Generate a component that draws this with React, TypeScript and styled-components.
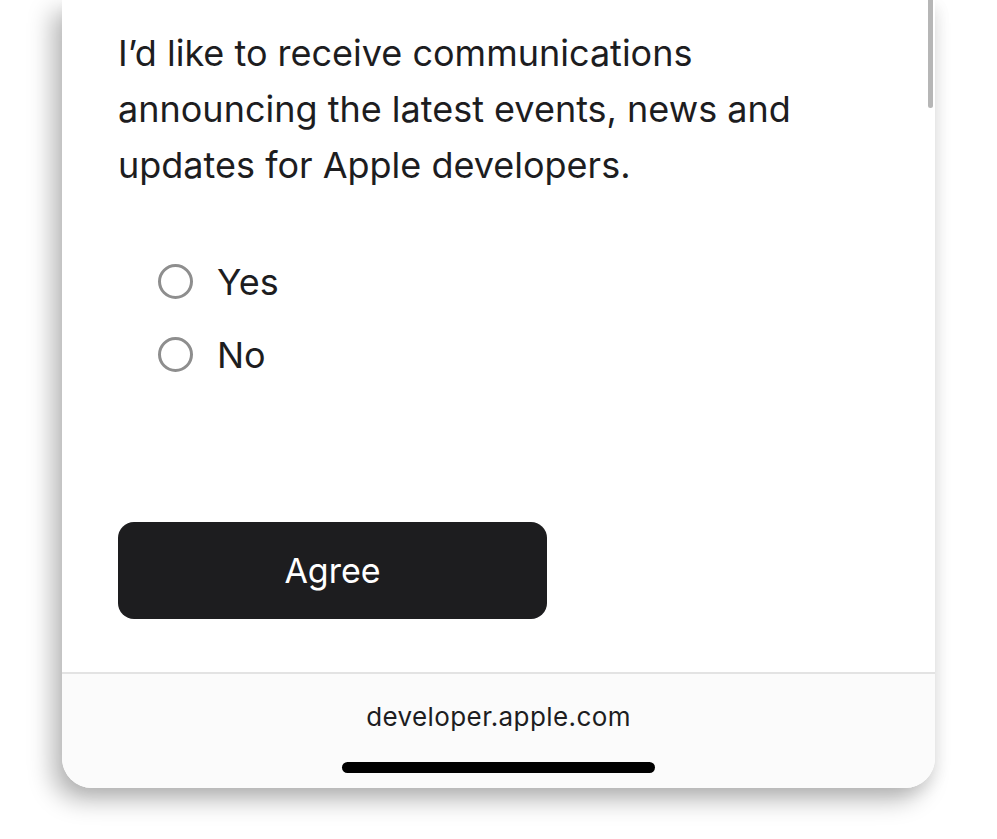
import React, { useState } from 'react'
import styled, { createGlobalStyle } from 'styled-components'

const GlobalStyle = createGlobalStyle`
  html, body {
    margin: 0;
    padding: 0;
    background: #ffffff;
    overflow: hidden;
  }
  body {
    font-family: Inter, "Liberation Sans", Arial, sans-serif;
    -webkit-font-smoothing: antialiased;
  }
`

const OPTIONS = ['Yes', 'No']

const App: React.FC = () => {
  const [choice, setChoice] = useState<string | null>(null)

  return (
    <>
      <GlobalStyle />
      <Stage>
        <Phone>
          <Scrollbar />
          <Content>
            <Consent>
              I’d like to receive communications announcing the latest events, news and
              updates for Apple developers.
            </Consent>
            <RadioGroup>
              {OPTIONS.map(opt => (
                <RadioRow key={opt} onClick={() => setChoice(opt)}>
                  <RadioCircle checked={choice === opt} />
                  <RadioLabel>{opt}</RadioLabel>
                </RadioRow>
              ))}
            </RadioGroup>
            <AgreeButton type="button">Agree</AgreeButton>
          </Content>
          <AddressBar>
            <Url>developer.apple.com</Url>
            <HomeIndicator />
          </AddressBar>
        </Phone>
      </Stage>
    </>
  )
}

const Stage = styled.div`
  width: 997px;
  height: 839px;
  padding-left: 62px;
  box-sizing: border-box;
`

const Phone = styled.div`
  position: relative;
  width: 873px;
  height: 788px;
  background: #ffffff;
  border-radius: 0 0 30px 30px;
  box-shadow: -10px 12px 24px rgba(0, 0, 0, 0.28), 4px 6px 14px rgba(0, 0, 0, 0.06);
  display: flex;
  flex-direction: column;
  overflow: hidden;
`

const Scrollbar = styled.div`
  position: absolute;
  top: 0;
  right: 2px;
  width: 5px;
  height: 108px;
  border-radius: 0 0 3px 3px;
  background: #b6b6b6;
`

const Content = styled.div`
  flex: 1;
  padding: 25px 0 0 56px;
  display: flex;
  flex-direction: column;
`

const Consent = styled.p`
  margin: 0;
  width: 690px;
  font-size: 36px;
  line-height: 56px;
  color: #1d1d1f;
`

const RadioGroup = styled.div`
  display: flex;
  flex-direction: column;
  margin-top: 52px;
  padding-left: 40px;
`

const RadioRow = styled.label`
  display: flex;
  align-items: center;
  gap: 24px;
  height: 73px;
  cursor: pointer;
`

const RadioCircle = styled.span<{ checked: boolean }>`
  width: 35px;
  height: 35px;
  box-sizing: border-box;
  border-radius: 50%;
  border: 3px solid ${({ checked }) => (checked ? '#0071e3' : '#8e8e8e')};
  background: ${({ checked }) => (checked ? 'radial-gradient(circle, #0071e3 45%, transparent 48%)' : 'transparent')};
`

const RadioLabel = styled.span`
  font-size: 36px;
  color: #1d1d1f;
`

const AgreeButton = styled.button`
  margin-top: 131px;
  width: 429px;
  height: 97px;
  border: none;
  border-radius: 16px;
  background: #1d1d1f;
  color: #ffffff;
  font-family: inherit;
  font-size: 34px;
  cursor: pointer;
`

const AddressBar = styled.div`
  height: 114px;
  border-top: 2px solid #e3e3e3;
  background: #fbfbfb;
  display: flex;
  flex-direction: column;
  align-items: center;
`

const Url = styled.div`
  margin-top: 28px;
  font-size: 26px;
  line-height: 30px;
  color: #1d1d1f;
  letter-spacing: 0.4px;
`

const HomeIndicator = styled.div`
  margin-top: 30px;
  width: 313px;
  height: 11px;
  border-radius: 6px;
  background: #000000;
`

export default App
